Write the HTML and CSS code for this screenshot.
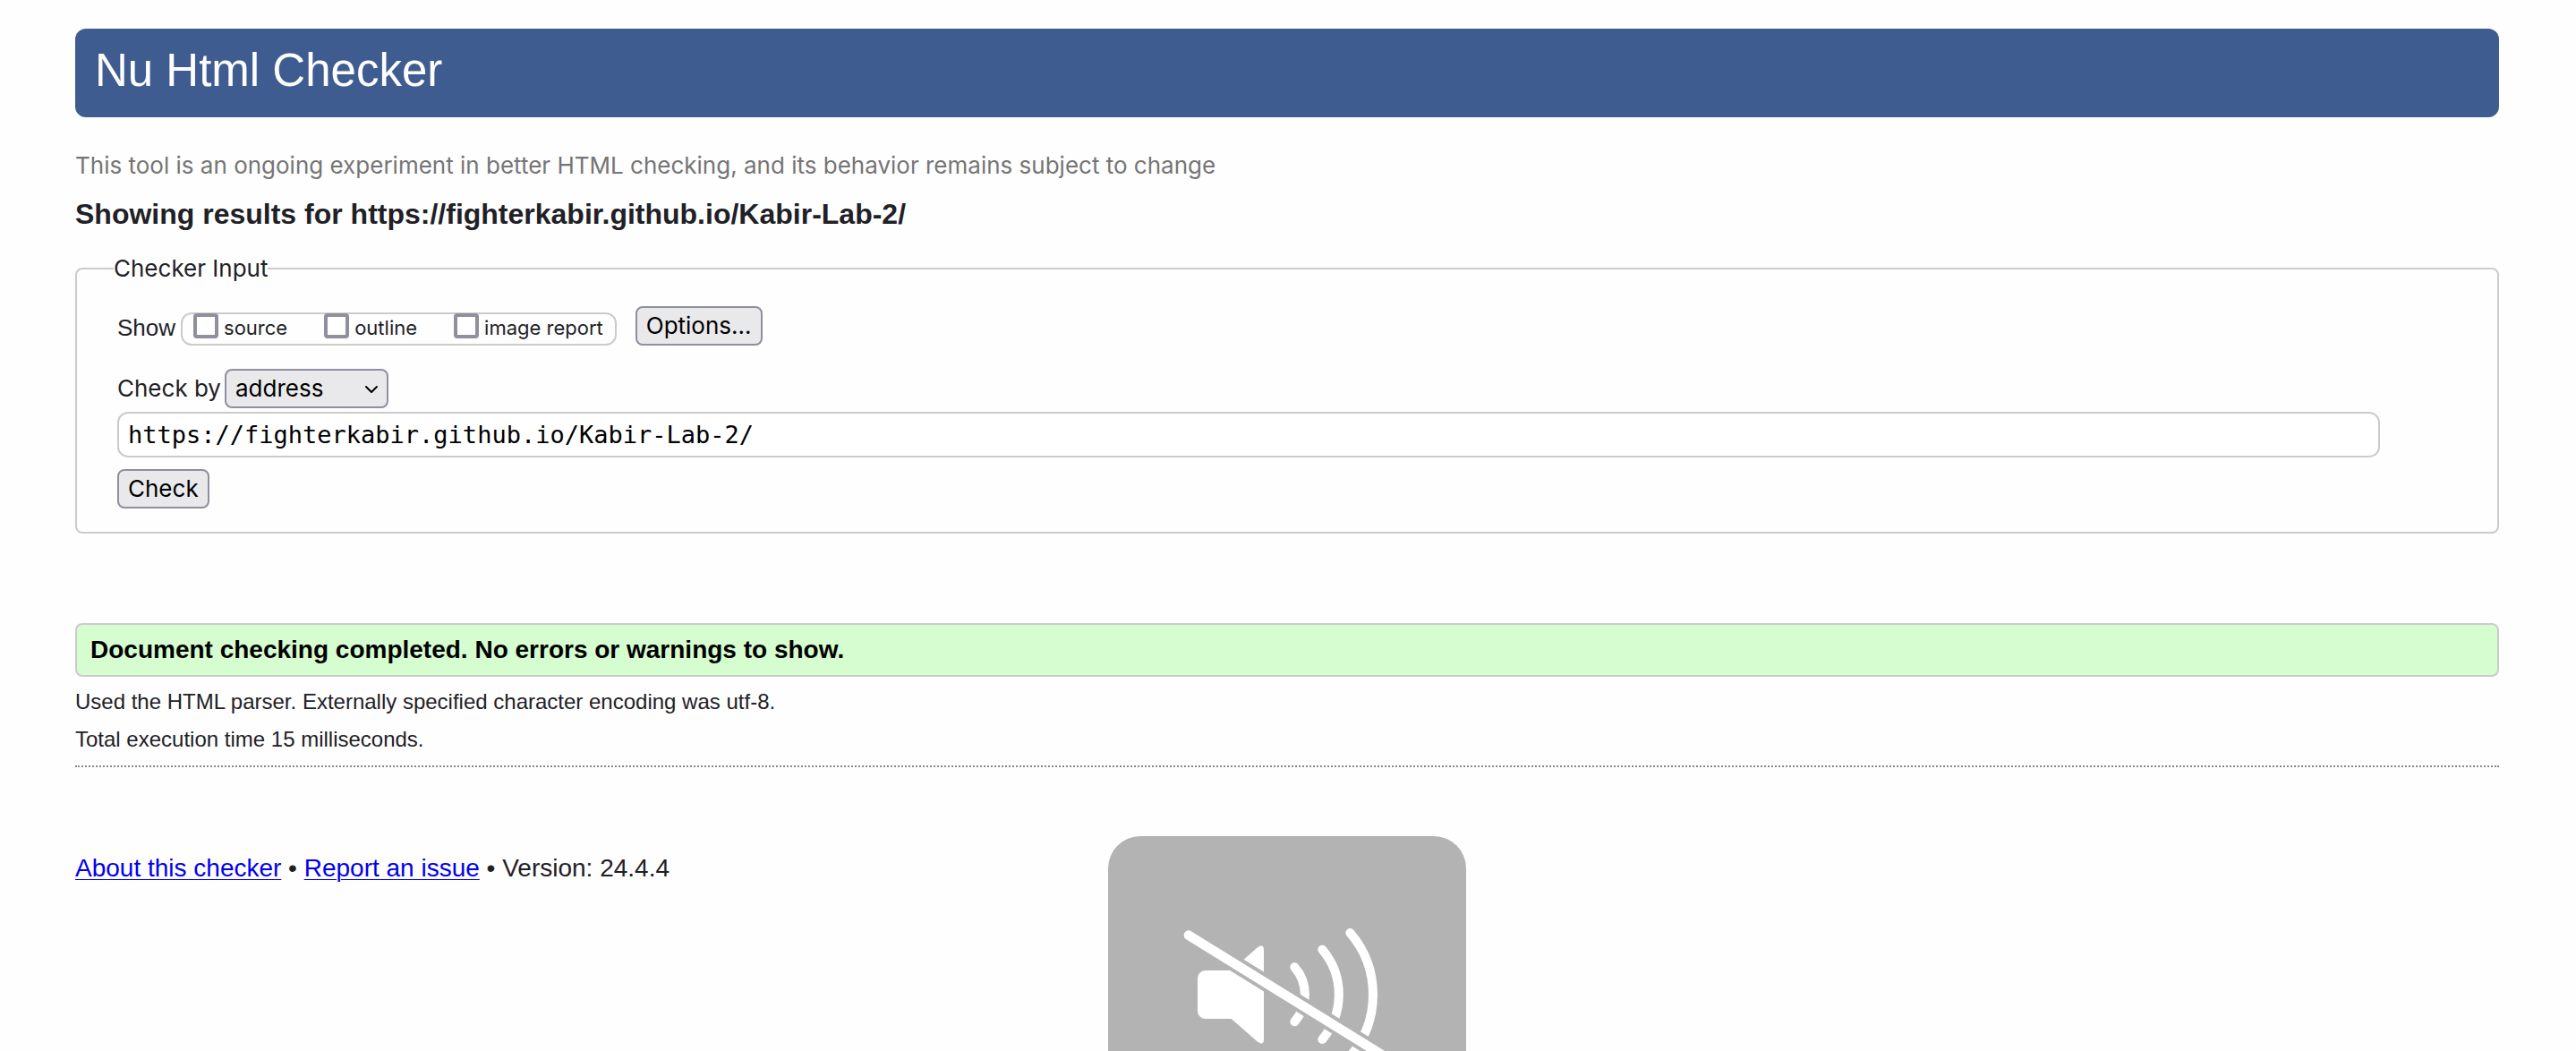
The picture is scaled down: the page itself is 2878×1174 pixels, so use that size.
FILE: index.html
```html
<!DOCTYPE html>
<html lang="en">
<head>
<meta charset="utf-8">
<title>Nu Html Checker</title>
<link rel="stylesheet" href="styles.css">
</head>
<body>
<header class="banner"><h1 class="title">Nu Html Checker</h1></header>
<main>
  <p class="tagline">This tool is an ongoing experiment in better HTML checking, and its behavior remains subject to change</p>
  <h2 class="results-for">Showing results for https://fighterkabir.github.io/Kabir-Lab-2/</h2>
  <form>
    <fieldset class="checker">
      <legend class="legend">Checker Input</legend>
      <div class="show-row">
        <span class="show-label">Show</span>
        <div class="show-options">
          <label class="option"><input class="tick" type="checkbox">source</label>
          <label class="option"><input class="tick" type="checkbox">outline</label>
          <label class="option"><input class="tick" type="checkbox">image report</label>
        </div>
        <button class="button" type="button">Options...</button>
      </div>
      <div class="by-row">
        <label for="by">Check by</label>
        <div class="select-wrap">
          <select class="select" id="by"><option>address</option></select>
          <svg class="chevron" viewBox="0 0 16 10" aria-hidden="true"><path d="M2 2l6 6 6-6"/></svg>
        </div>
      </div>
      <input class="address" type="text" aria-label="Address" value="https://fighterkabir.github.io/Kabir-Lab-2/">
      <button class="button" type="button">Check</button>
    </fieldset>
  </form>
  <section class="results">
    <p class="success">Document checking completed. No errors or warnings to show.</p>
    <p class="detail">Used the HTML parser. Externally specified character encoding was utf-8.</p>
    <p class="detail">Total execution time 15 milliseconds.</p>
  </section>
</main>
<footer class="footer"><a href="#about">About this checker</a> • <a href="#issue">Report an issue</a> • Version: 24.4.4</footer>
<div class="volume">
  <svg class="volume-icon" viewBox="54 42 1200 1200" role="img" aria-label="Muted">
    <path fill="#fff" d="M380 492H467L556 414Q576 402 576 424V722Q576 744 556 732L467 654H380A26 26 0 0 1 354 628V518A26 26 0 0 1 380 492Z"/>
    <g fill="none" stroke="#fff" stroke-width="30" stroke-linecap="round">
      <path d="M679 481A138 138 0 0 1 679 664"/>
      <path d="M772 422A232 232 0 0 1 772 723"/>
      <path d="M865 366A317 317 0 0 1 865 780"/>
    </g>
    <path d="M324 374L984 782" stroke="#b3b3b3" stroke-width="56"/>
    <path d="M324 374L984 782" stroke="#fff" stroke-width="32" stroke-linecap="round"/>
  </svg>
</div>
</body>
</html>
```
FILE: styles.css
```css
* { box-sizing: border-box; }
body {
  margin: 0;
  padding: 32px 86px 0 84px;
  background: #fefefe;
  color: #1f2126;
  font: 28px/32px "Liberation Sans", Arial, sans-serif;
}
h1, h2, p { margin: 0; }
.banner {
  height: 99px;
  padding: 15px 22px;
  border-radius: 12px;
  background: #3f5c91;
  color: #fefefe;
}
.title { font-size: 51px; line-height: 64px; font-weight: 400; }
.tagline {
  margin-top: 38px;
  color: #757575;
  font: 26px/32px Inter, sans-serif;
}
.results-for { margin-top: 18px; font-size: 32px; line-height: 40px; }
.checker {
  display: block;
  margin: 25px 0 0;
  padding: 26px 131px 26px 45px;
  border: 2px solid #cbcbcb;
  border-radius: 8px;
  font: 26px/32px Inter, sans-serif;
}
.legend { margin-left: -4px; padding: 0; }
.show-row { display: flex; align-items: flex-end; }
.show-label { padding-bottom: 4px; font: 26px/32px "Liberation Sans", Arial, sans-serif; }
.show-options {
  display: flex;
  gap: 41px;
  margin: 0 21px 0 6px;
  padding: 0 13px 2px 12px;
  border: 2px solid #cbcbcb;
  border-radius: 12px;
  font-size: 22px;
  line-height: 31px;
}
.option { display: flex; align-items: flex-start; gap: 6px; }
.tick {
  appearance: none;
  width: 28px;
  height: 28px;
  margin: -1px 0 0;
  border: 4px solid #8f8f9d;
  border-radius: 4px;
  background: #fff;
}
.button, .select {
  height: 44px;
  margin: 0;
  padding: 0 10px;
  border: 2px solid #8f8f9d;
  border-radius: 8px;
  background: #e9e9ec;
  color: #000;
  font: 26px/32px Inter, sans-serif;
}
.by-row { display: flex; align-items: center; gap: 4px; margin-top: 26px; }
.select-wrap { position: relative; }
.select { display: block; appearance: none; width: 183px; }
.chevron {
  position: absolute;
  right: 11px;
  top: 18px;
  width: 16px;
  height: 10px;
  fill: none;
  stroke: #000;
  stroke-width: 2;
  stroke-linecap: round;
  stroke-linejoin: round;
  pointer-events: none;
}
.address {
  display: block;
  width: 100%;
  height: 51px;
  margin: 4px 0 13px;
  padding: 0 10px;
  border: 2px solid #cbcbcb;
  border-radius: 12px;
  background: #fff;
  color: #000;
  font: 27px/32px "DejaVu Sans Mono", monospace;
}
.results {
  margin-top: 100px;
  padding-bottom: 8px;
  border-bottom: 2px dotted #888;
}
.success {
  margin-bottom: 7px;
  padding: 12px 15px;
  border: 2px solid #cbcbcb;
  border-radius: 8px;
  background: #d6fdd0;
  color: #000;
  font-weight: 700;
}
.detail { font-size: 24px; line-height: 42px; }
.footer { margin-top: 97px; }
.footer a { color: #0000ee; text-decoration-thickness: 1px; text-underline-offset: 3px; }
.volume {
  position: fixed;
  left: calc(50% - 201px);
  bottom: -160px;
  width: 400px;
  height: 400px;
  border-radius: 36px;
  background: #b3b3b3;
}
.volume-icon { display: block; width: 100%; height: 100%; }
```
